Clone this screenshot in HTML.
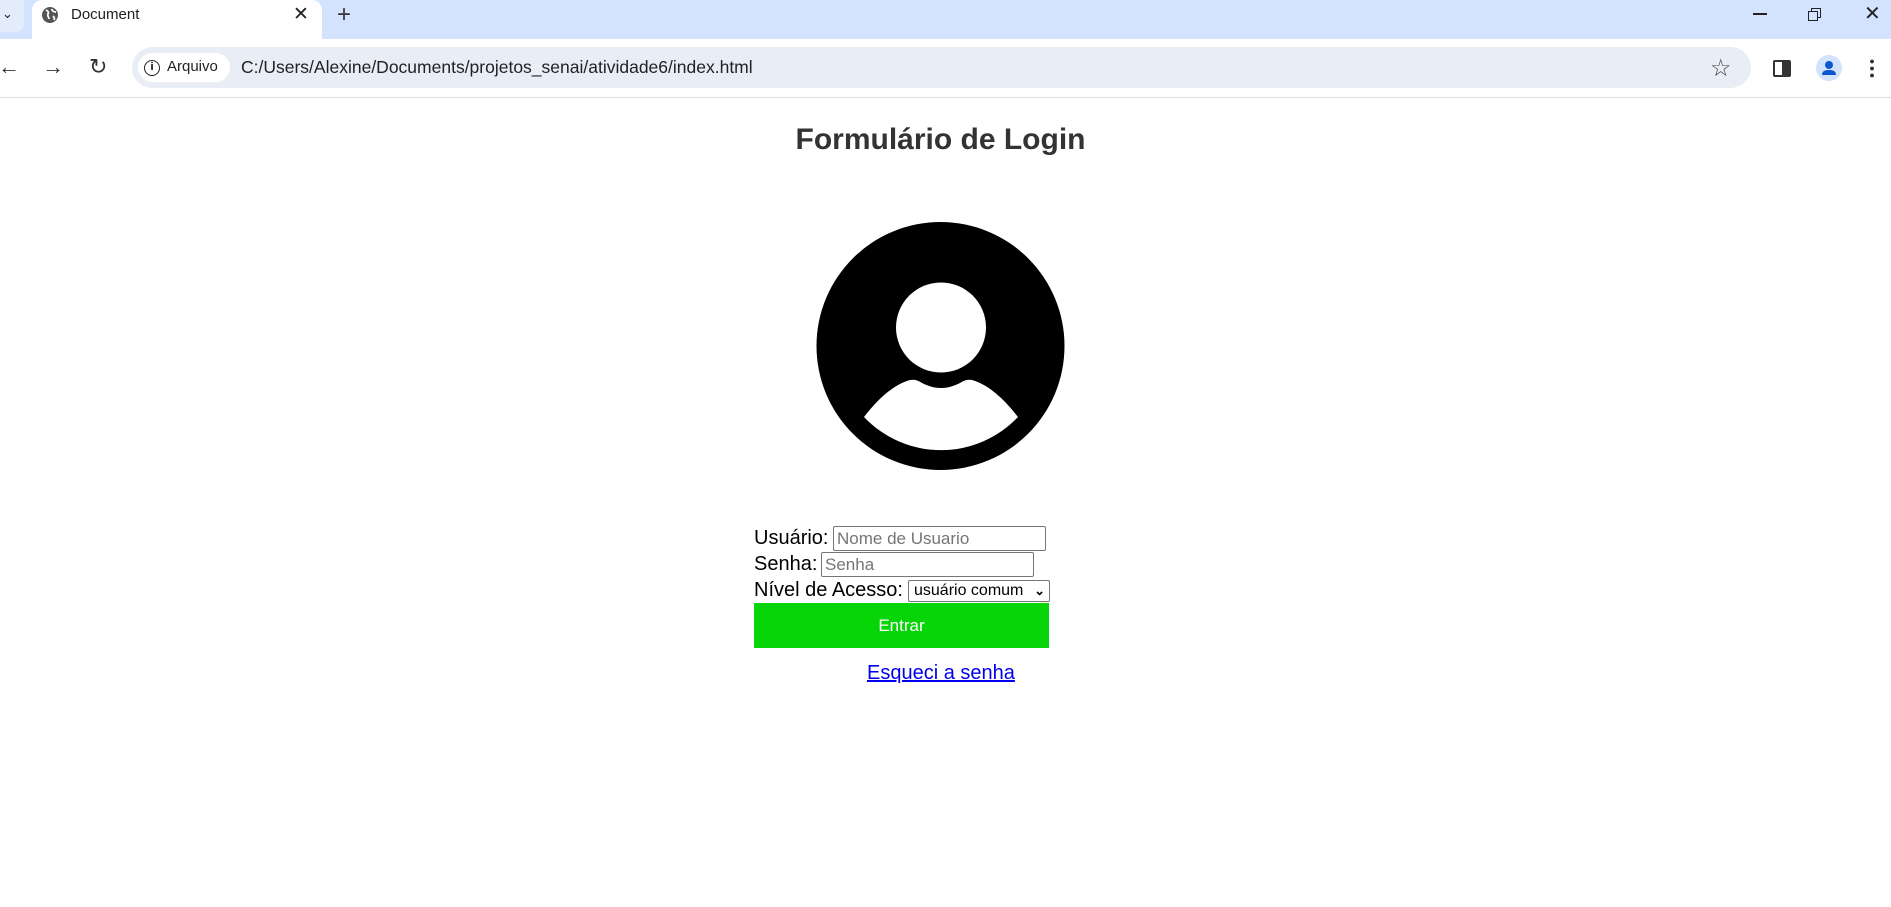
<!DOCTYPE html>
<html><head><meta charset="utf-8"><style>
*{margin:0;padding:0;box-sizing:border-box}
body{width:1891px;height:907px;position:relative;background:#fff;font-family:"Liberation Sans",Arial,sans-serif;overflow:hidden}
.a{position:absolute}
</style></head><body>
<div class="a" style="left:0;top:0;width:1891px;height:39px;background:#d3e3fd"></div>
<div class="a" style="left:0;top:0;width:24px;height:32px;background:#e3ecfb;border-radius:0 0 8px 0"></div>
<div class="a" style="left:2px;top:6px;font-size:13px;color:#222">&#8964;</div>
<div class="a" style="left:32px;top:0;width:290px;height:39px;background:#fff;border-radius:10px 10px 0 0"></div>
<svg class="a" style="left:41px;top:6px" width="18" height="18" viewBox="0 0 18 18"><circle cx="9" cy="9" r="8" fill="#555"/><path d="M5 4c2 1 3 2 2 4s1 3 1 5M11 3c0 2 2 3 4 3M12 10c1 1 2 2 1 4" stroke="#fff" stroke-width="1.8" fill="none"/></svg>
<div class="a" style="left:71px;top:6px;font-size:15px;color:#1f1f1f">Document</div>
<div class="a" style="left:293px;top:3px;font-size:19px;color:#222">&#10005;</div>
<div class="a" style="left:337px;top:1px;font-size:24px;color:#333">+</div>
<div class="a" style="left:1753px;top:13px;width:14px;height:1.5px;background:#222"></div>
<div class="a" style="left:1811px;top:8px;width:10px;height:10px;border:1.5px solid #222"></div>
<div class="a" style="left:1808px;top:11px;width:10px;height:10px;border:1.5px solid #222;background:#d3e3fd"></div>
<div class="a" style="left:1864px;top:1px;font-size:20px;color:#222">&#10005;</div>
<div class="a" style="left:0;top:97px;width:1891px;height:1px;background:#ddd"></div>
<div class="a" style="left:-2px;top:54px;font-size:22px;color:#333">&#8592;</div>
<div class="a" style="left:42px;top:54px;font-size:22px;color:#333">&#8594;</div>
<div class="a" style="left:89px;top:54px;font-size:22px;color:#333">&#8635;</div>
<div class="a" style="left:132px;top:47px;width:1619px;height:41px;background:#e9eef6;border-radius:21px"></div>
<div class="a" style="left:138px;top:53px;width:92px;height:29px;background:#fff;border-radius:15px"></div>
<div class="a" style="left:144px;top:60px;width:16px;height:16px;border:1.8px solid #222;border-radius:50%;font-size:11px;font-weight:bold;text-align:center;line-height:13px">i</div>
<div class="a" style="left:167px;top:58px;font-size:15px;color:#222">Arquivo</div>
<div class="a" style="left:241px;top:57px;font-size:17.5px;color:#222">C:/Users/Alexine/Documents/projetos_senai/atividade6/index.html</div>
<div class="a" style="left:1710px;top:54px;font-size:24px;color:#444">&#9734;</div>
<div class="a" style="left:1773px;top:60px;width:18px;height:17px;border:2px solid #333;border-radius:2px;background:linear-gradient(90deg,#fff 50%,#333 50%)"></div>
<div class="a" style="left:1816px;top:55px;width:26px;height:26px;border-radius:50%;background:#d3e3fd"></div>
<svg class="a" style="left:1816px;top:55px" width="26" height="26"><circle cx="13" cy="10" r="4" fill="#0b57d0"/><path d="M6 20c0-4 3-5 7-5s7 1 7 5z" fill="#0b57d0"/></svg>
<div class="a" style="left:1870px;top:58px;width:4px;height:20px;background:radial-gradient(circle,#333 1.8px,transparent 2px) 0 0/4px 7px"></div>

<div class="a" style="left:-5px;width:1891px;top:123px;text-align:center;font-size:30px;font-weight:bold;color:#333">Formulário de Login</div>
<svg class="a" style="left:0;top:0" width="1891" height="907"><circle cx="940.5" cy="346" r="124" fill="#000"/><circle cx="941" cy="327.5" r="45" fill="#fff"/><path d="M864 417 Q888 386 910 380 Q916 379 922 383 Q941 393 960 383 Q966 379 972 380 Q994 386 1018 417 A106 106 0 0 1 864 417Z" fill="#fff"/></svg>

<div class="a" style="left:754px;top:525px;font-size:20px;color:#000;line-height:26px">Usuário:</div>
<div class="a" style="left:833px;top:526px;width:213px;height:25px;border:1px solid #767676;border-radius:2px;font-size:17px;color:#757575;padding:2px 3px;line-height:19px">Nome de Usuario</div>
<div class="a" style="left:754px;top:551px;font-size:20px;color:#000;line-height:26px">Senha:</div>
<div class="a" style="left:821px;top:552px;width:213px;height:25px;border:1px solid #767676;border-radius:2px;font-size:17px;color:#757575;padding:2px 3px;line-height:19px">Senha</div>
<div class="a" style="left:754px;top:577px;font-size:20px;color:#000;line-height:26px">Nível de Acesso:</div>
<div class="a" style="left:908px;top:580px;width:142px;height:22px;border:1px solid #767676;border-radius:2px;font-size:16px;color:#000;padding:0 5px;line-height:20px">usuário comum <span style="position:absolute;right:4px;top:0;font-size:13px;font-weight:bold">&#8964;</span></div>
<div class="a" style="left:754px;top:603px;width:295px;height:45px;background:#08d508;color:#fff;font-size:17px;text-align:center;line-height:45px">Entrar</div>
<div class="a" style="left:867px;top:662px;font-size:20px;color:#0000ee;text-decoration:underline">Esqueci a senha</div>
</body></html>
